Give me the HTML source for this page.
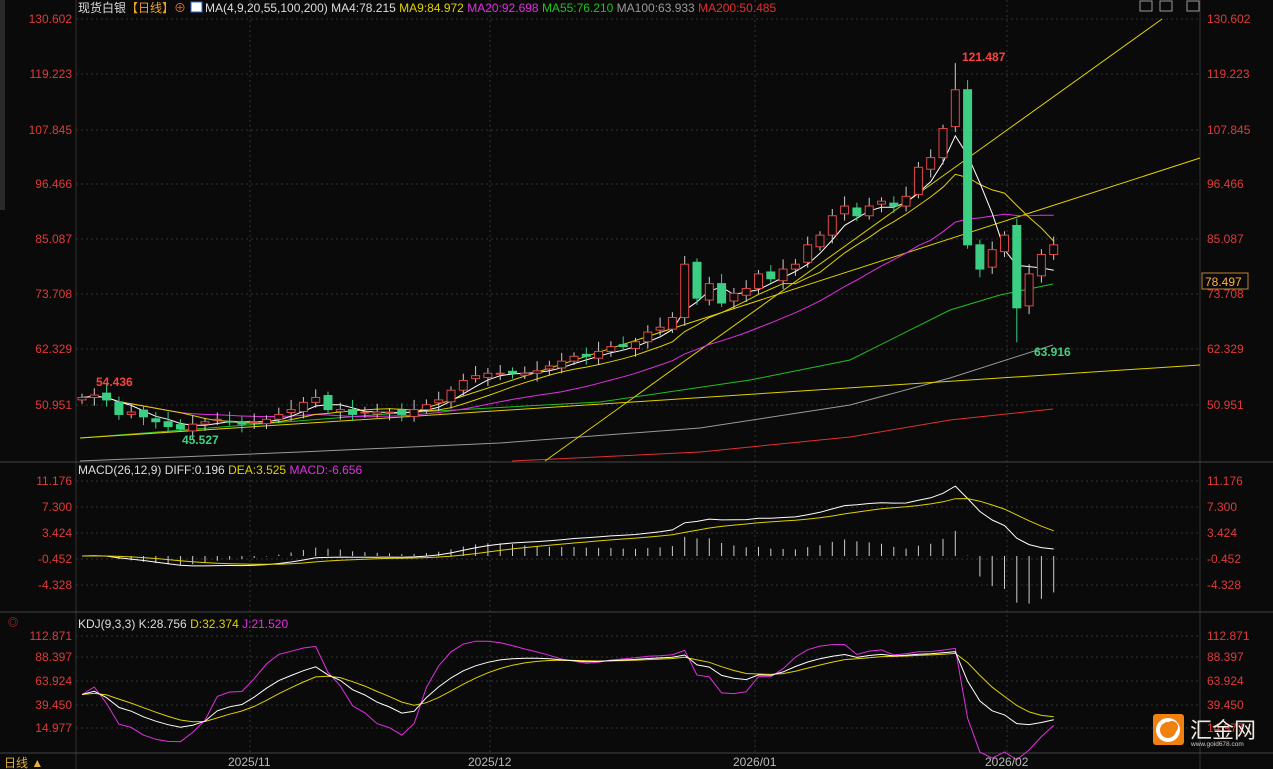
<!DOCTYPE html>
<html><head><meta charset="utf-8"><style>
html,body{margin:0;padding:0;background:#0a0a0a;width:1273px;height:769px;overflow:hidden;font-family:"Liberation Sans","Noto Sans CJK SC",sans-serif}
svg{display:block}
text{font-family:"Liberation Sans","Noto Sans CJK SC",sans-serif;font-size:12px}
</style></head><body>
<svg id="s" width="1273" height="769" xmlns="http://www.w3.org/2000/svg">
<rect width="1273" height="769" fill="#0a0a0a"/>
<rect x="0" y="0" width="5" height="210" fill="#2a2a2a"/>
<line x1="76" y1="0" x2="76" y2="769" stroke="#333"/>
<line x1="1200" y1="0" x2="1200" y2="769" stroke="#333"/>
<line x1="0" y1="462" x2="1273" y2="462" stroke="#444"/>
<line x1="0" y1="612" x2="1273" y2="612" stroke="#444"/>
<line x1="0" y1="753" x2="1273" y2="753" stroke="#444"/>
<g id="grid" stroke="#333" stroke-dasharray="2,3"></g>
<g id="plot"></g>
<g fill="#e03a3a" text-anchor="end">
<text x="72" y="23">130.602</text><text x="72" y="78">119.223</text><text x="72" y="134">107.845</text><text x="72" y="188">96.466</text><text x="72" y="243">85.087</text><text x="72" y="298">73.708</text><text x="72" y="353">62.329</text><text x="72" y="409">50.951</text>
<text x="72" y="485">11.176</text><text x="72" y="511">7.300</text><text x="72" y="537">3.424</text><text x="72" y="563">-0.452</text><text x="72" y="589">-4.328</text>
<text x="72" y="640">112.871</text><text x="72" y="661">88.397</text><text x="72" y="685">63.924</text><text x="72" y="709">39.450</text><text x="72" y="732">14.977</text>
</g>
<g fill="#e03a3a">
<text x="1207" y="23">130.602</text><text x="1207" y="78">119.223</text><text x="1207" y="134">107.845</text><text x="1207" y="188">96.466</text><text x="1207" y="243">85.087</text><text x="1207" y="298">73.708</text><text x="1207" y="353">62.329</text><text x="1207" y="409">50.951</text>
<text x="1207" y="485">11.176</text><text x="1207" y="511">7.300</text><text x="1207" y="537">3.424</text><text x="1207" y="563">-0.452</text><text x="1207" y="589">-4.328</text>
<text x="1207" y="640">112.871</text><text x="1207" y="661">88.397</text><text x="1207" y="685">63.924</text><text x="1207" y="709">39.450</text><text x="1207" y="732">14.977</text>
</g>
<rect x="1202" y="273" width="46" height="16" fill="#0a0a0a" stroke="#c08030"/>
<text x="1205" y="286" fill="#ffb040">78.497</text>
<text x="78" y="12" fill="#ddd">现货白银<tspan fill="#f0a030">【日线】</tspan><tspan fill="#e07020">⊕</tspan></text>
<rect x="191" y="2" width="11" height="10" fill="#fff" stroke="#36c"/>
<text x="205" y="12" fill="#ddd">MA(4,9,20,55,100,200) MA4:78.215 <tspan fill="#e0d000">MA9:84.972</tspan> <tspan fill="#e030e0">MA20:92.698</tspan> <tspan fill="#20c020">MA55:76.210</tspan> <tspan fill="#999">MA100:63.933</tspan> <tspan fill="#e03030">MA200:50.485</tspan></text>
<text x="78" y="474" fill="#ddd">MACD(26,12,9) DIFF:0.196 <tspan fill="#e0d000">DEA:3.525</tspan> <tspan fill="#e030e0">MACD:-6.656</tspan></text>
<text x="78" y="628" fill="#ddd">KDJ(9,3,3) K:28.756 <tspan fill="#e0d000">D:32.374</tspan> <tspan fill="#e030e0">J:21.520</tspan></text>
<text x="8" y="626" fill="#e03a3a" style="font-size:10px">◎</text>
<text x="96" y="386" fill="#ff4040" font-weight="bold">54.436</text>
<text x="182" y="444" fill="#40d080" font-weight="bold">45.527</text>
<text x="962" y="61" fill="#ff4040" font-weight="bold">121.487</text>
<text x="1034" y="356" fill="#40d080" font-weight="bold">63.916</text>
<g fill="#bbb"><text x="228" y="766">2025/11</text><text x="468" y="766">2025/12</text><text x="733" y="766">2026/01</text><text x="985" y="766">2026/02</text></g>
<text x="4" y="767" fill="#e0b040">日线 ▲</text>
<rect x="1140" y="1" width="12" height="10" fill="none" stroke="#999"/><rect x="1160" y="1" width="12" height="10" fill="none" stroke="#999"/><rect x="1187" y="1" width="12" height="10" fill="none" stroke="#999"/>
<rect x="1153" y="714" width="31" height="31" rx="3" fill="#f08010"/>
<circle cx="1168" cy="730" r="10" fill="none" stroke="#fff" stroke-width="4"/>
<circle cx="1172" cy="727" r="6" fill="#f08010"/>
<text x="1190" y="738" fill="#f0e8e0" style="font-size:22px">汇金网</text>
<text x="1191" y="746" fill="#ccc" style="font-size:6.5px">www.gold678.com</text>
</svg>
<script>
var C=[52.5,53,52,49,49.5,48.5,47.5,46.5,46,47,47.5,48,47.5,47,47.5,48,49,50,51.5,52.5,50,50,49,49.5,49.5,49.5,49,50,51,52,54,56,57,57.5,57.5,57.5,57.5,58,59,60,61,61,62,63,63,64,66,67,69,80,73,76,72,74,75,78,77,79,80,84,86,90,92,90,92,93,92,94,100,102,108,116,84,79,83,86,71,78,82,84];
var NS="http://www.w3.org/2000/svg",P=document.getElementById('plot'),G=document.getElementById('grid');
function el(t,a,p){var e=document.createElementNS(NS,t);for(var k in a)e.setAttribute(k,a[k]);(p||P).appendChild(e);return e;}
function Y(p){return 19+(130.602-p)*4.846;}
function X(i){return 82+i*12.3;}
[19,74,130,184,239,294,349,405,481,507,533,559,585,636,657,681,705,728].forEach(function(y){el('line',{x1:76,x2:1200,y1:y,y2:y},G);});
[250,490,755,1007].forEach(function(x){el('line',{x1:x,x2:x,y1:0,y2:753},G);});
function pl(pts,c){el('polyline',{points:pts.map(function(p){return p[0].toFixed(1)+','+p[1].toFixed(1)}).join(' '),fill:'none',stroke:c,'stroke-width':1});}
pl([[80,461],[300,452],[500,443],[700,428],[850,405],[950,378],[1053,345]],'#999');
pl([[512,461],[700,452],[850,437],[950,420],[1053,409]],'#e03030');
pl([[80,438],[400,413],[600,402],[750,380],[850,360],[950,310],[1000,295],[1053,284]],'#20c020');
pl([[80,438],[1200,365]],'#e0d000');
pl([[545,461],[1162,19]],'#e0d000');
pl([[420,410],[1200,158]],'#e0d000');
function ma(n){var r=[];for(var i=0;i<C.length;i++){var s=0,m=Math.min(n,i+1);for(var j=i-m+1;j<=i;j++)s+=C[j];r.push([X(i),Y(s/m)]);}return r;}
pl(ma(20),'#e030e0');pl(ma(9),'#e0d000');pl(ma(4),'#fff');
for(var i=0;i<C.length;i++){var o=i?C[i-1]+(i%3-1)*0.4:52,c=C[i];if(i==72)o=116;if(i==76)o=88;var hi=Math.max(o,c)+0.8+(i*7%5)*0.3,lo=Math.min(o,c)-0.8-(i*3%4)*0.3;if(i==71)hi=121.5;if(i==76)lo=63.9;if(i==8)lo=45.5;if(i==1)hi=54.4;
var x=X(i),up=c>=o,col=up?'#e04848':'#3ccf84';el('line',{x1:x,x2:x,y1:Y(hi),y2:Y(lo),stroke:up?'#ccc':col});
var t=Y(Math.max(o,c)),h=Math.max(1,Y(Math.min(o,c))-t);el('rect',{x:x-4,y:t,width:8,height:h,fill:up?'#0a0a0a':col,stroke:col});}
function ema(a,n){var k=2/(n+1),r=[a[0]];for(var i=1;i<a.length;i++)r.push(r[i-1]+k*(a[i]-r[i-1]));return r;}
var e12=ema(C,12),e26=ema(C,26),D=e12.map(function(v,i){return v-e26[i]}),E=ema(D,9);
function MY(v){return 556-v*6.708;}
for(var i=0;i<C.length;i++){var m=(D[i]-E[i])*2;el('line',{x1:X(i),x2:X(i),y1:556,y2:MY(m),stroke:'#ccc'});}
pl(D.map(function(v,i){return[X(i),MY(v)]}),'#fff');pl(E.map(function(v,i){return[X(i),MY(v)]}),'#e0d000');
var K=[],Dd=[],J=[],k=50,d=50;for(var i=0;i<C.length;i++){var hh=-1e9,ll=1e9;for(var j=Math.max(0,i-8);j<=i;j++){hh=Math.max(hh,C[j]+1);ll=Math.min(ll,C[j]-1);}var rsv=(C[i]-ll)/(hh-ll)*100;k=2/3*k+rsv/3;d=2/3*d+k/3;K.push(k);Dd.push(d);J.push(3*k-2*d);}
function KY(v){return 681-(v-63.924)*0.97;}
pl(J.map(function(v,i){return[X(i),KY(v)]}),'#e030e0');pl(Dd.map(function(v,i){return[X(i),KY(v)]}),'#e0d000');pl(K.map(function(v,i){return[X(i),KY(v)]}),'#fff');
</script>
</body></html>
